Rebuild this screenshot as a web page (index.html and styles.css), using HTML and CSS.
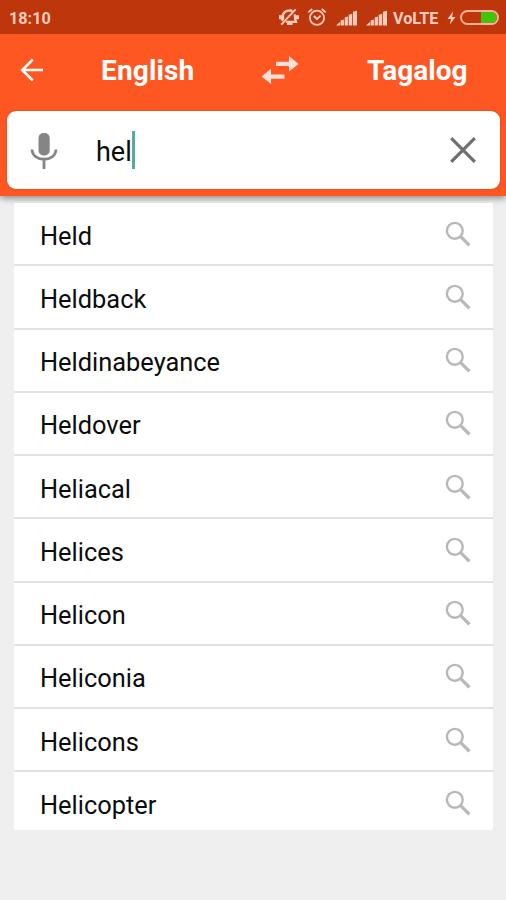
FILE: index.html
```html
<!DOCTYPE html>
<html lang="en">
<head>
<meta charset="utf-8">
<title>English – Tagalog</title>
<link rel="stylesheet" href="styles.css">
</head>
<body>
<svg class="defs" width="0" height="0">
  <symbol id="search" viewBox="0 0 26 26">
    <circle cx="9.8" cy="9.8" r="7.9" fill="none" stroke="currentColor" stroke-width="2.4"/>
    <path d="M15.7 15.7L24.4 24.4" fill="none" stroke="currentColor" stroke-width="3.2"/>
  </symbol>
  <symbol id="signal" viewBox="0 0 22 16">
    <path d="M0 15.5L4 12V15.5ZM4.6 15.5V10.4L7.9 9.4V15.5ZM8.7 15.5V7.4L11.9 6.6V15.5ZM12.7 15.5V4.8L16.2 3.8V15.5ZM17 15.5V1.8L21 .8V15.5Z" fill="currentColor"/>
  </symbol>
</svg>
<header class="top">
  <div class="status">
    <span class="time">18:10</span>
    <svg class="mute" viewBox="0 0 22 20" width="22" height="20" fill="none" stroke="currentColor">
      <path d="M3.6 13.6L5 11.8V7.5Q6.5 4.2 10 3.6L13 3.4L14.2 4.6M16.6 7.4L17.2 12L18 14.8H8.2M9 16.8H14.5" stroke-width="2.3"/>
      <path d="M1 10.2H5M17 10.2H21" stroke-width="4"/>
      <path d="M3.2 17.6L17.6 2.4" stroke-width="2"/>
    </svg>
    <svg class="alarm" viewBox="0 0 20 20" width="20" height="20" fill="none" stroke="currentColor" stroke-width="1.8">
      <circle cx="10" cy="10.8" r="7.1"/>
      <path d="M6.8 9L10 12L13.6 8.7M1.3 5.4L5.2 2M18.7 5.4L14.8 2"/>
    </svg>
    <svg class="signal-a" width="22" height="16"><use href="#signal"/></svg>
    <svg class="signal-b" width="22" height="16"><use href="#signal"/></svg>
    <span class="volte">VoLTE</span>
    <svg class="bolt" viewBox="0 0 9 14" width="9" height="14"><path d="M6 .5L.5 8H4L2.8 13.5L8.5 6H5.2Z" fill="currentColor"/></svg>
    <span class="battery"><span class="charge"></span></span>
  </div>
  <div class="bar">
    <svg class="back" viewBox="0 0 24 24" width="24" height="24" fill="none" stroke="#fff" stroke-width="2.5"><path d="M23 12H2M12.8 1.5L2.2 12L12.8 22.5"/></svg>
    <span class="lang from">English</span>
    <svg class="swap" viewBox="0 0 38 28" width="38" height="28"><path d="M15 5.7H28V0L37.6 7.9L28 15.5V10H15ZM23.5 18.4H10V12.8L.5 20.6L10 28V22.8H23.5Z" fill="currentColor"/></svg>
    <span class="lang to">Tagalog</span>
  </div>
  <div class="search">
    <svg class="mic" viewBox="0 0 28 38" width="28" height="38"><rect x="8.5" y="2" width="11.2" height="22.5" rx="5" fill="#858585"/><path d="M2 18.5C2.5 31.5 25.5 31.5 26 18.5M14 28V38" fill="none" stroke="#858585" stroke-width="2.8"/></svg>
    <span class="query">hel</span><span class="caret"></span>
    <svg class="clear" viewBox="0 0 26 26" width="26" height="26"><path d="M1.2 1.2L24.8 24.8M24.8 1.2L1.2 24.8" stroke="#6f6f6f" stroke-width="3.2"/></svg>
  </div>
</header>
<ul class="results">
  <li><span>Held</span><svg><use href="#search"/></svg></li>
  <li><span>Heldback</span><svg><use href="#search"/></svg></li>
  <li><span>Heldinabeyance</span><svg><use href="#search"/></svg></li>
  <li><span>Heldover</span><svg><use href="#search"/></svg></li>
  <li><span>Heliacal</span><svg><use href="#search"/></svg></li>
  <li><span>Helices</span><svg><use href="#search"/></svg></li>
  <li><span>Helicon</span><svg><use href="#search"/></svg></li>
  <li><span>Heliconia</span><svg><use href="#search"/></svg></li>
  <li><span>Helicons</span><svg><use href="#search"/></svg></li>
  <li><span>Helicopter</span><svg><use href="#search"/></svg></li>
</ul>
</body>
</html>
```
FILE: styles.css
```css
* { box-sizing: border-box; }
body {
  margin: 0;
  min-height: 900px;
  background: #efefef;
  font-family: Roboto, "Liberation Sans", sans-serif;
  color: #0c0c0c;
}
svg { display: block; flex: none; }
.defs { position: absolute; }
.top {
  height: 196px;
  background: #ff5722;
  box-shadow: 0 2px 7px rgba(0, 0, 0, .45);
}
.status {
  display: flex;
  align-items: center;
  height: 34px;
  padding: 1px 7px 0 9px;
  background: #bd360c;
  color: #ffcdbd;
}
.time { width: 269px; padding-top: 1px; font-size: 16.2px; font-weight: 700; }
.mute { margin-top: -1px; }
.alarm { margin: -1px 0 0 7px; }
.signal-a { margin-left: 9px; }
.signal-b { margin-left: 8px; }
.volte { width: 46px; margin-left: 5px; padding-top: 1px; font-size: 16.2px; font-weight: 700; white-space: nowrap; }
.bolt { margin-left: 8px; }
.battery {
  display: flex;
  justify-content: flex-end;
  width: 39px;
  height: 15px;
  margin-left: 4px;
  border: 2px solid #ffb09a;
  border-radius: 8px;
  overflow: hidden;
}
.charge { width: 16px; background: #43c40b; border-radius: 0 5px 5px 0; }
.bar { display: flex; align-items: center; height: 77px; padding: 0 20px 5px; }
.lang { font-size: 28px; font-weight: 700; line-height: 36px; color: #fff; }
.back { margin-top: -1px; }
.from { width: 160px; margin-left: 57px; padding-top: 2px; letter-spacing: .15px; }
.swap { color: #ffdfd6; }
.to { margin-left: 68px; padding-top: 2px; }
.search {
  display: flex;
  align-items: center;
  height: 78px;
  margin: 0 6px 0 7px;
  padding: 0 24px 0 23px;
  background: #fff;
  border-radius: 9px;
  box-shadow: 0 0 2px #d43600;
}
.query { margin-left: 38px; padding-top: 3px; font-size: 27px; line-height: 34px; }
.caret { width: 3px; height: 38px; background: #58ab9c; }
.clear { margin-left: auto; }
.results {
  height: 627px;
  margin: 7px 13px 0 14px;
  padding: 0;
  list-style: none;
  background: #fff;
  border-radius: 2px;
  overflow: hidden;
}
.results li {
  display: flex;
  align-items: center;
  justify-content: space-between;
  height: 63.27px;
  padding: 4px 22px 0 26px;
  border-bottom: 2px solid #e2e2e2;
  font-size: 25.4px;
}
.results li:last-child { border-bottom-color: transparent; }
.results svg { width: 26px; height: 26px; margin-top: -4px; color: #b8b8b8; }
```
